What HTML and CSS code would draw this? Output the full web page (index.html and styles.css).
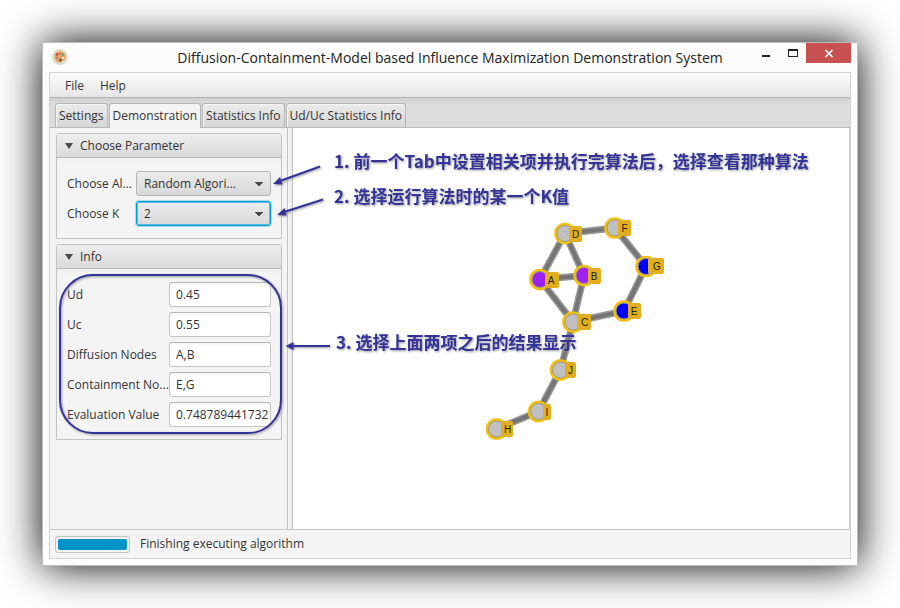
FILE: index.html
```html
<!DOCTYPE html>
<html lang="en">
<head>
<meta charset="utf-8">
<title>Diffusion-Containment-Model based Influence Maximization Demonstration System</title>
<link rel="stylesheet" href="styles.css">
</head>
<body>
<div class="window">
  <header class="titlebar">
    <svg class="app-icon" width="16" height="16" viewBox="0 0 16 16" aria-hidden="true">
      <circle cx="8" cy="8" r="8" fill="#dcdccb"/>
      <path d="M8 2.200C4.600 2.200 2.400 4.800 2.600 8c.2 3 2.600 5.800 5.700 5.800 1.600 0 1.500-1.300 2.300-2 1-.8 2.700-.3 2.900-3C13.700 5 11.400 2.200 8 2.200z" fill="#e9a066"/>
      <circle cx="5" cy="5.500" r="1.300" fill="#c8473d"/>
      <circle cx="8" cy="4.500" r="1.100" fill="#d9663f"/>
      <circle cx="11" cy="5.500" r="1.300" fill="#49a595"/>
      <circle cx="5" cy="9" r="1.100" fill="#d97a3c"/>
      <circle cx="8.500" cy="11" r="1.200" fill="#54403f"/>
      <circle cx="10.800" cy="9" r="1" fill="#fff"/>
    </svg>
    <h1 class="title">Diffusion-Containment-Model based Influence Maximization Demonstration System</h1>
    <div class="controls">
      <button class="control" aria-label="Minimize"><svg width="27" height="20" viewBox="0 0 27 20"><path d="M10 13h8" stroke="#222" stroke-width="2"/></svg></button>
      <button class="control" aria-label="Maximize"><svg width="27" height="20" viewBox="0 0 27 20"><path d="M9 6h10v8H9zM10 8h8v5h-8z" fill="#222" fill-rule="evenodd"/></svg></button>
      <button class="control close" aria-label="Close"><svg width="45" height="20" viewBox="0 0 45 20"><path d="M19.500 7l7 7M26.500 7l-7 7" stroke="#fff" stroke-width="1.700"/></svg></button>
    </div>
  </header>
  <div class="client">
    <nav class="menubar">
      <button class="menu">File</button>
      <button class="menu">Help</button>
    </nav>
    <div class="tabs" role="tablist">
      <button class="tab" role="tab">Settings</button>
      <button class="tab active" role="tab" aria-selected="true">Demonstration</button>
      <button class="tab" role="tab">Statistics Info</button>
      <button class="tab" role="tab">Ud/Uc Statistics Info</button>
    </div>
    <main class="content">
      <aside class="sidebar">
        <section class="pane">
          <h2 class="pane-title">Choose Parameter</h2>
          <div class="pane-body params">
            <label for="algorithm">Choose Al...</label>
            <select class="combo" id="algorithm"><option>Random Algori...</option></select>
            <label for="k">Choose K</label>
            <select class="combo focused" id="k"><option>2</option></select>
          </div>
        </section>
        <section class="pane">
          <h2 class="pane-title">Info</h2>
          <div class="pane-body info">
            <label for="ud">Ud</label><input class="field" id="ud" type="text" value="0.45">
            <label for="uc">Uc</label><input class="field" id="uc" type="text" value="0.55">
            <label for="dn">Diffusion Nodes</label><input class="field" id="dn" type="text" value="A,B">
            <label for="cn">Containment No...</label><input class="field" id="cn" type="text" value="E,G">
            <label for="ev">Evaluation Value</label><input class="field" id="ev" type="text" value="0.748789441732">
          </div>
        </section>
      </aside>
      <div class="divider"></div>
      <div class="canvas"></div>
      <svg class="overlay" width="799" height="401" viewBox="50 128 799 401">
        <defs>
          <g id="halo"><circle r="10.800" fill="#f4c006"/></g>
          <g id="gray"><use href="#halo"/><circle r="8" fill="#c0c0c0" stroke="#999" stroke-width="1"/></g>
          <g id="purple"><use href="#halo"/><circle r="8" fill="#a020f0" stroke="#999" stroke-width="1"/></g>
          <g id="blue"><use href="#halo"/><circle r="8" fill="#0000ff" stroke="#999" stroke-width="1"/></g>
          <path id="edges" d="M565 233.500L615 228L646 266.500L624 311L573 322L540 279.500L565 233.500L584 275.500L540 279.500M584 275.500L573 322L560.500 370L538.500 411.500L496.500 429"/>
        </defs>
        <use href="#edges" fill="none" stroke="#999" stroke-width="7"/>
        <use href="#edges" fill="none" stroke="#757575" stroke-width="4"/>
        <g>
          <use href="#gray" x="565" y="233.500"/><use href="#gray" x="615" y="228"/>
          <use href="#blue" x="646" y="266.500"/><use href="#blue" x="624" y="311"/>
          <use href="#gray" x="573" y="322"/><use href="#purple" x="540" y="279.500"/>
          <use href="#purple" x="584" y="275.500"/><use href="#gray" x="560.500" y="370"/>
          <use href="#gray" x="538.500" y="411.500"/><use href="#gray" x="496.500" y="429"/>
        </g>
        <g fill="#e0ae1e">
          <rect x="569" y="226" width="13" height="16" rx="2"/><rect x="618" y="220" width="13" height="16" rx="2"/>
          <rect x="648" y="258" width="16" height="16" rx="2"/><rect x="628" y="303" width="13" height="16" rx="2"/>
          <rect x="577" y="314" width="14" height="16" rx="2"/><rect x="545" y="272" width="14" height="16" rx="2"/>
          <rect x="588" y="268" width="13" height="16" rx="2"/><rect x="565" y="362" width="11" height="16" rx="2"/>
          <rect x="543" y="404" width="8" height="16" rx="2"/><rect x="501" y="421" width="12" height="16" rx="2"/>
        </g>
        <g class="node-label">
          <text x="575.500" y="238">D</text><text x="624.500" y="232">F</text><text x="657" y="270">G</text>
          <text x="634" y="315">E</text><text x="584.500" y="326">C</text><text x="551" y="284">A</text>
          <text x="594" y="280">B</text><text x="570.500" y="374">J</text><text x="547" y="416">I</text><text x="507.500" y="433">H</text>
        </g>
        <g class="note">
          <rect x="60" y="275" width="221" height="158" rx="33" fill="none" stroke="#333399" stroke-width="2"/>
          <path d="M320 166.500L280 181M323 199.500L284 212M330 346H292" fill="none" stroke="#333399" stroke-width="2"/>
          <path d="M273 184l7-7 2.500 7.500zM277 215l7.500-7 2 7.500zM285.500 346l8-4v8z" fill="#333399"/>
          <g lang="zh-CN">
            <text x="334" y="168">1. 前一个Tab中设置相关项并执行完算法后，选择查看那种算法</text>
            <text x="334" y="203">2. 选择运行算法时的某一个K值</text>
            <text x="336" y="349">3. 选择上面两项之后的结果显示</text>
          </g>
        </g>
      </svg>
    </main>
    <footer class="status">
      <div class="progress" role="progressbar" aria-label="Progress" aria-valuenow="100"><div class="bar"></div></div>
      <span>Finishing executing algorithm</span>
    </footer>
  </div>
</div>
</body>
</html>
```
FILE: styles.css
```css
* { box-sizing: border-box; }

body {
  margin: 0;
  min-height: 100vh;
  padding: 42px;
  display: flex;
  background: #fff;
  color: #333;
  font: 12px/16px "Open Sans", "Noto Sans", sans-serif;
}

button, input, select { font: inherit; color: inherit; margin: 0; }

.window {
  flex: 1;
  min-width: 0;
  display: flex;
  flex-direction: column;
  padding: 0 6px 6px;
  background: #fcfcfc;
  border: 1px solid #bdbdbd;
  box-shadow: 0 0 40px #000;
}

.titlebar {
  height: 29px;
  display: flex;
  align-items: flex-start;
  padding-left: 3px;
}

.app-icon { flex: none; margin-top: 6px; }

.title {
  flex: 1;
  margin: 0;
  padding-top: 5px;
  padding-left: 80px;
  text-align: center;
  white-space: nowrap;
  font-size: 14px;
  line-height: 20px;
  font-weight: 400;
  color: #222;
}

.controls { display: flex; flex: none; }
.control { padding: 0; border: 0; background: none; height: 20px; }
.control svg { display: block; }
.close { background: #c75050; }

.client {
  flex: 1;
  display: flex;
  flex-direction: column;
  border: 1px solid #d2d2d2;
  background: #f4f4f4;
}

.menubar {
  height: 25px;
  display: flex;
  align-items: center;
  padding: 2px 7px 0;
  background: linear-gradient(#fbfbfb, #e6e6e6);
  border-bottom: 1px solid #b5b5b5;
}

.menu { padding: 0 8px; border: 0; background: none; }

.tabs {
  height: 30px;
  display: flex;
  align-items: flex-end;
  gap: 1px;
  padding: 0 5px;
  background: linear-gradient(#cfcfcf, #dcdcdc 6px);
  border-bottom: 1px solid #b8b8b8;
}

.tab {
  height: 24px;
  padding: 0 3px;
  border: 1px solid #b5b5b5;
  border-bottom: 0;
  border-radius: 3px 3px 0 0;
  background: linear-gradient(#ebebeb, #d7d7d7);
  box-shadow: inset 1px 1px #f5f5f5;
  white-space: nowrap;
}

.tab.active { height: 25px; margin-bottom: -1px; background: #f4f4f4; }

.content {
  position: relative;
  flex: 1;
  display: flex;
  border-right: 1px solid #c8c8c8;
  border-bottom: 1px solid #c8c8c8;
}

.sidebar {
  width: 237px;
  flex: none;
  display: flex;
  flex-direction: column;
  gap: 5px;
  padding: 5px 5px 5px 6px;
}

.divider {
  width: 6px;
  flex: none;
  border: 1px solid #c3c3c3;
  border-width: 0 1px;
  background: linear-gradient(90deg, #fafafa, #e8e8e8);
}

.canvas { flex: 1; background: #fff; }

.pane { border: 1px solid #c3c3c3; border-radius: 3px 3px 0 0; }

.pane-title {
  display: flex;
  align-items: center;
  gap: 7px;
  height: 24px;
  margin: 0;
  padding: 0 8px;
  font-size: 12px;
  font-weight: 400;
  background: linear-gradient(#efefef, #d9d9d9);
  border-bottom: 1px solid #b8b8b8;
  border-radius: 2px 2px 0 0;
}

.pane-title::before {
  content: "";
  border: 4px solid transparent;
  border-top: 6px solid #4b4b4b;
  border-bottom: 0;
}

.pane-body {
  display: grid;
  align-items: center;
  gap: 5px 0;
  padding: 13px 10px 12px;
  background: linear-gradient(#eee, #f4f4f4 5px);
}

.pane-body label { white-space: nowrap; }
.params { grid-template-columns: 69px 1fr; }
.info { grid-template-columns: 102px 1fr; }

.combo {
  appearance: none;
  width: 100%;
  height: 25px;
  padding: 0 22px 0 7px;
  border: 1px solid #b5b5b5;
  border-radius: 3px;
  background:
    conic-gradient(from -45deg at 50% 100%, #4b4b4b 90deg, transparent 0) right 7px center / 8px 4px no-repeat,
    linear-gradient(#ebebeb, #d9d9d9);
}

.focused { border-color: #039ed3; box-shadow: 0 0 0 1px #a8dcee, inset 0 0 0 1px #58bfe2; }

.field {
  width: 100%;
  min-width: 0;
  height: 25px;
  padding: 0 0 0 6px;
  border: 1px solid #c4c4c4;
  border-top-color: #b5b5b5;
  border-radius: 3px;
  background: linear-gradient(#f6f6f6, #fff 4px);
}

.overlay { position: absolute; left: 0; top: 0; overflow: visible; pointer-events: none; }
.node-label { font: 10px "Liberation Sans", sans-serif; fill: #222; text-anchor: middle; }
.note { filter: drop-shadow(1px 1px 1px #999); }
.note text { font: bold 17px "Noto Sans CJK SC", sans-serif; fill: #333399; }

.status { height: 28px; display: flex; align-items: center; gap: 10px; padding: 0 5px; }

.progress {
  width: 75px;
  height: 17px;
  padding: 2px;
  border: 1px solid #c4c4c4;
  border-radius: 3px;
  background: #f4f4f4;
}

.bar { height: 11px; border-radius: 2px; background: #0093c8; }
```
